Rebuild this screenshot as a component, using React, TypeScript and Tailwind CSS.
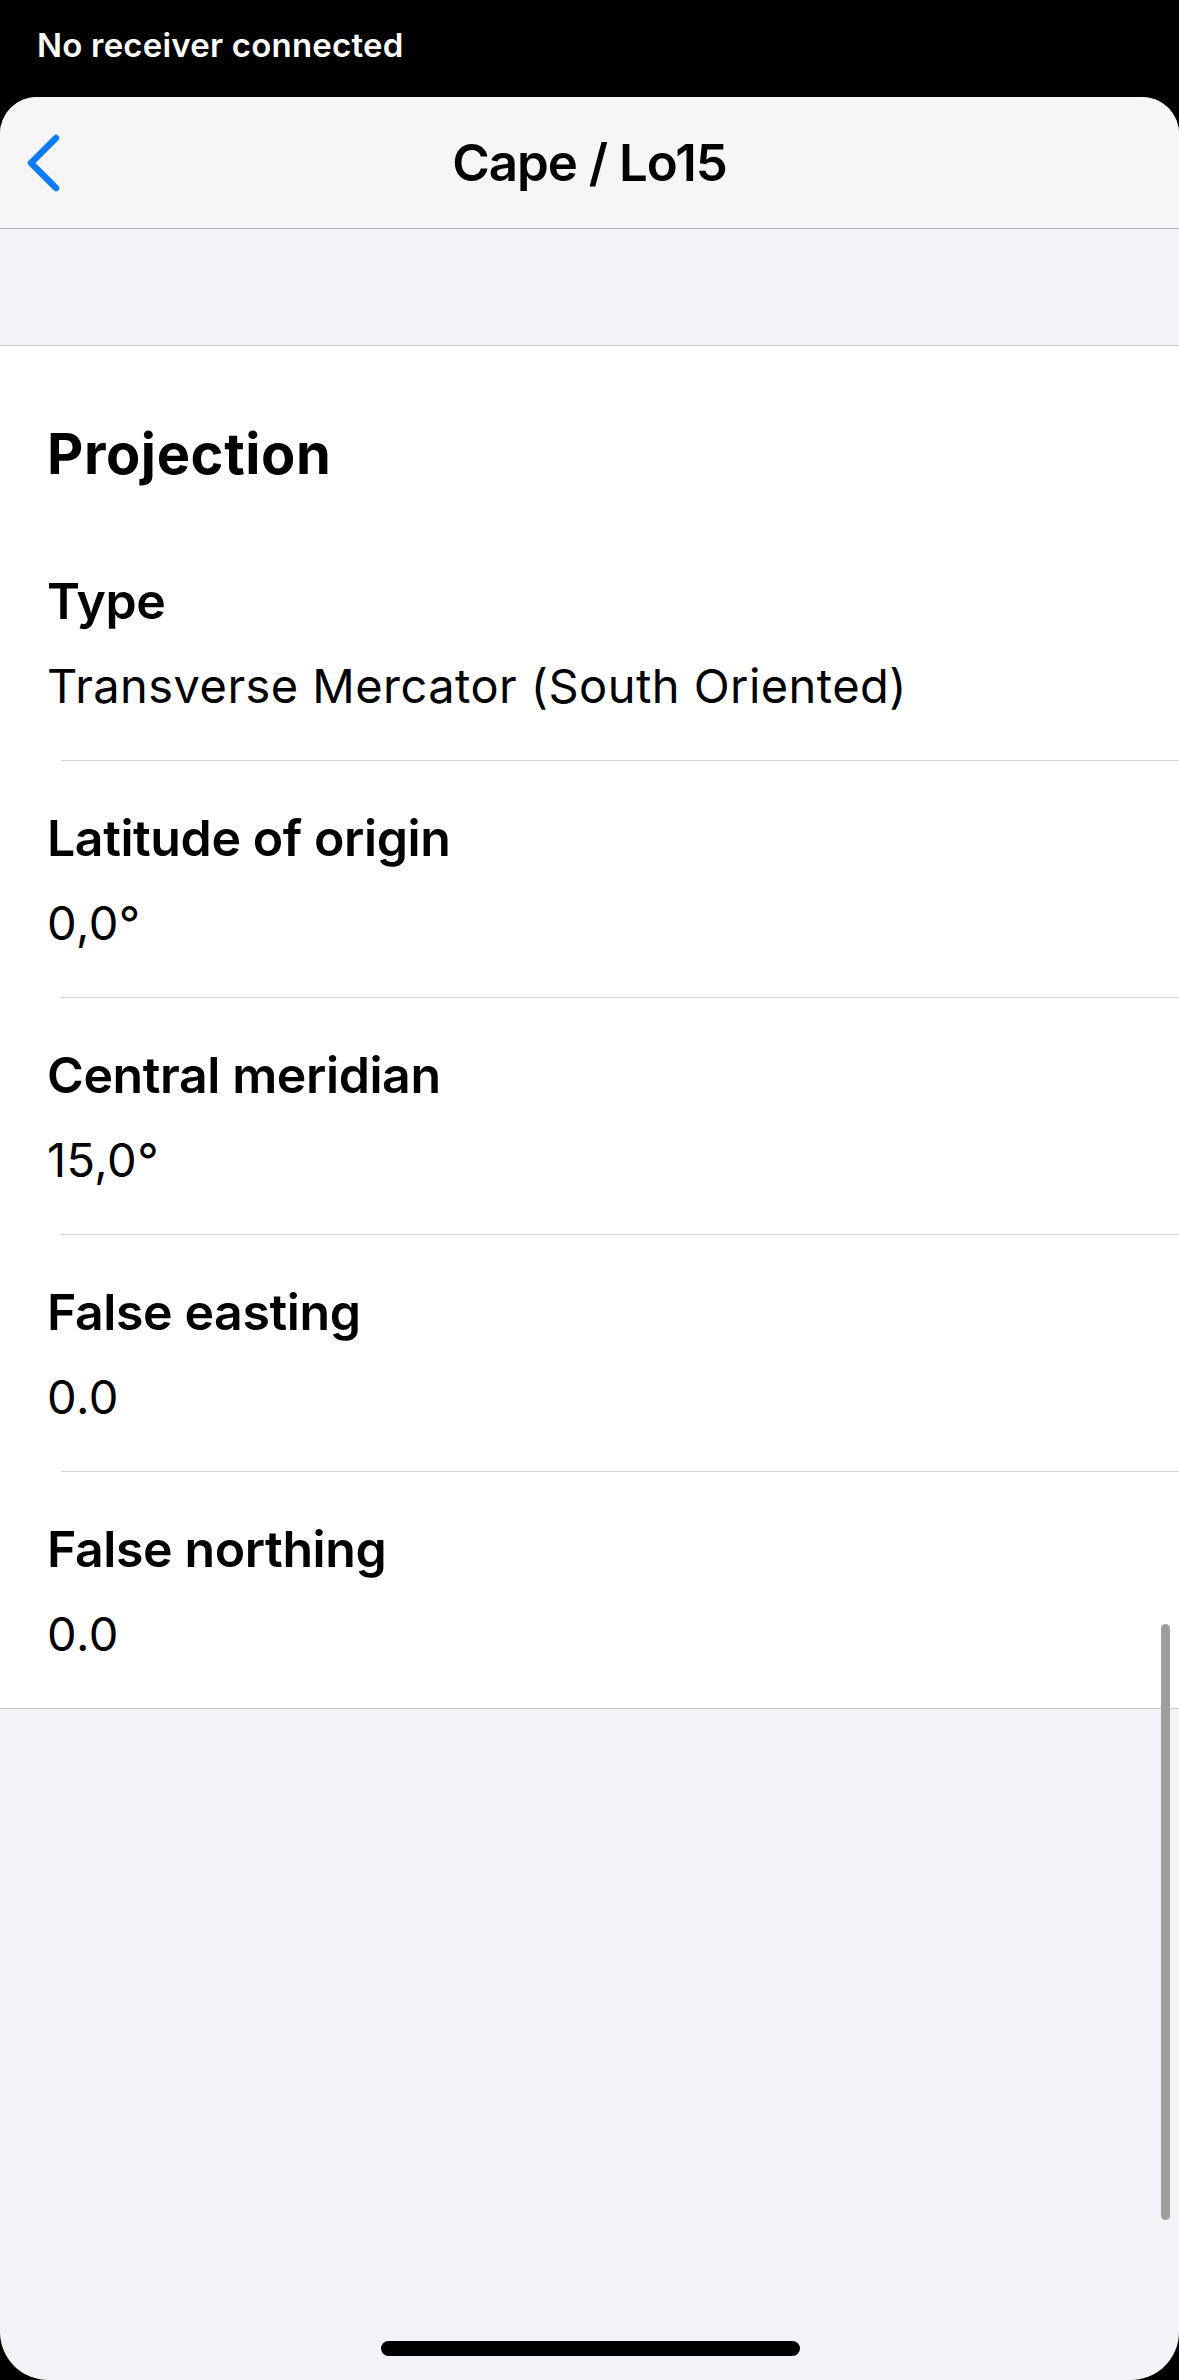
const rows = [
  { label: "Type", value: "Transverse Mercator (South Oriented)" },
  { label: "Latitude of origin", value: "0,0°" },
  { label: "Central meridian", value: "15,0°" },
  { label: "False easting", value: "0.0" },
  { label: "False northing", value: "0.0" },
];

function BackChevron() {
  return (
    <svg width="40" height="60" viewBox="0 0 40 60" fill="none">
      <path
        d="M32 5 L7 30 L32 55"
        stroke="#0a7aff"
        strokeWidth="6.5"
        strokeLinecap="round"
        strokeLinejoin="round"
      />
    </svg>
  );
}

export default function App() {
  return (
    <div className="flex h-[2380px] w-[1179px] flex-col overflow-hidden bg-black font-['Inter','Liberation_Sans',sans-serif] text-black">
      {/* status strip */}
      <div className="h-[97px] shrink-0 pl-[37px] pt-[25px]">
        <p className="text-[33px] font-semibold leading-[40px] tracking-[0.2px] text-white">
          No receiver connected
        </p>
      </div>

      <div className="relative flex flex-1 flex-col overflow-hidden rounded-t-[37px] rounded-b-[48px] bg-[#f2f2f7]">
        <header className="grid h-[132px] shrink-0 grid-cols-[1fr_auto_1fr] items-center border-b border-[#b4b4b6] bg-[#f6f6f6]">
          <div className="pl-[24px]">
            <BackChevron />
          </div>
          <h1 className="text-[51px] font-semibold leading-[60px] tracking-[-1px]">
            Cape / Lo15
          </h1>
          <div />
        </header>

        <div className="h-[116px] shrink-0" />

        <section className="border-y border-[#c8c8cc] bg-white">
          <h2 className="pl-[47px] pt-[74px] text-[56px] font-bold leading-[68px] tracking-[0.6px]">
            Projection
          </h2>
          <div className="mt-[36px]">
            {rows.map((row, index) => (
              <div key={row.label}>
                <div className="pl-[47px] pb-[44px] pt-[47px]">
                  <p className="text-[50px] font-semibold leading-[60px] tracking-[-0.4px]">
                    {row.label}
                  </p>
                  <p className="mt-[25px] text-[47px] leading-[60px] tracking-[0.45px]">
                    {row.value}
                  </p>
                </div>
                {index < rows.length - 1 && (
                  <div className="ml-[61px] h-px bg-[#d6d6d8]" />
                )}
              </div>
            ))}
          </div>
        </section>

        {/* scroll indicator */}
        <div className="absolute left-[1161px] top-[1527px] h-[596px] w-[9px] rounded-full bg-[#9e9e9e]" />
        {/* home indicator */}
        <div className="absolute bottom-[24px] left-[381px] h-[15px] w-[419px] rounded-full bg-black" />
      </div>
    </div>
  );
}
